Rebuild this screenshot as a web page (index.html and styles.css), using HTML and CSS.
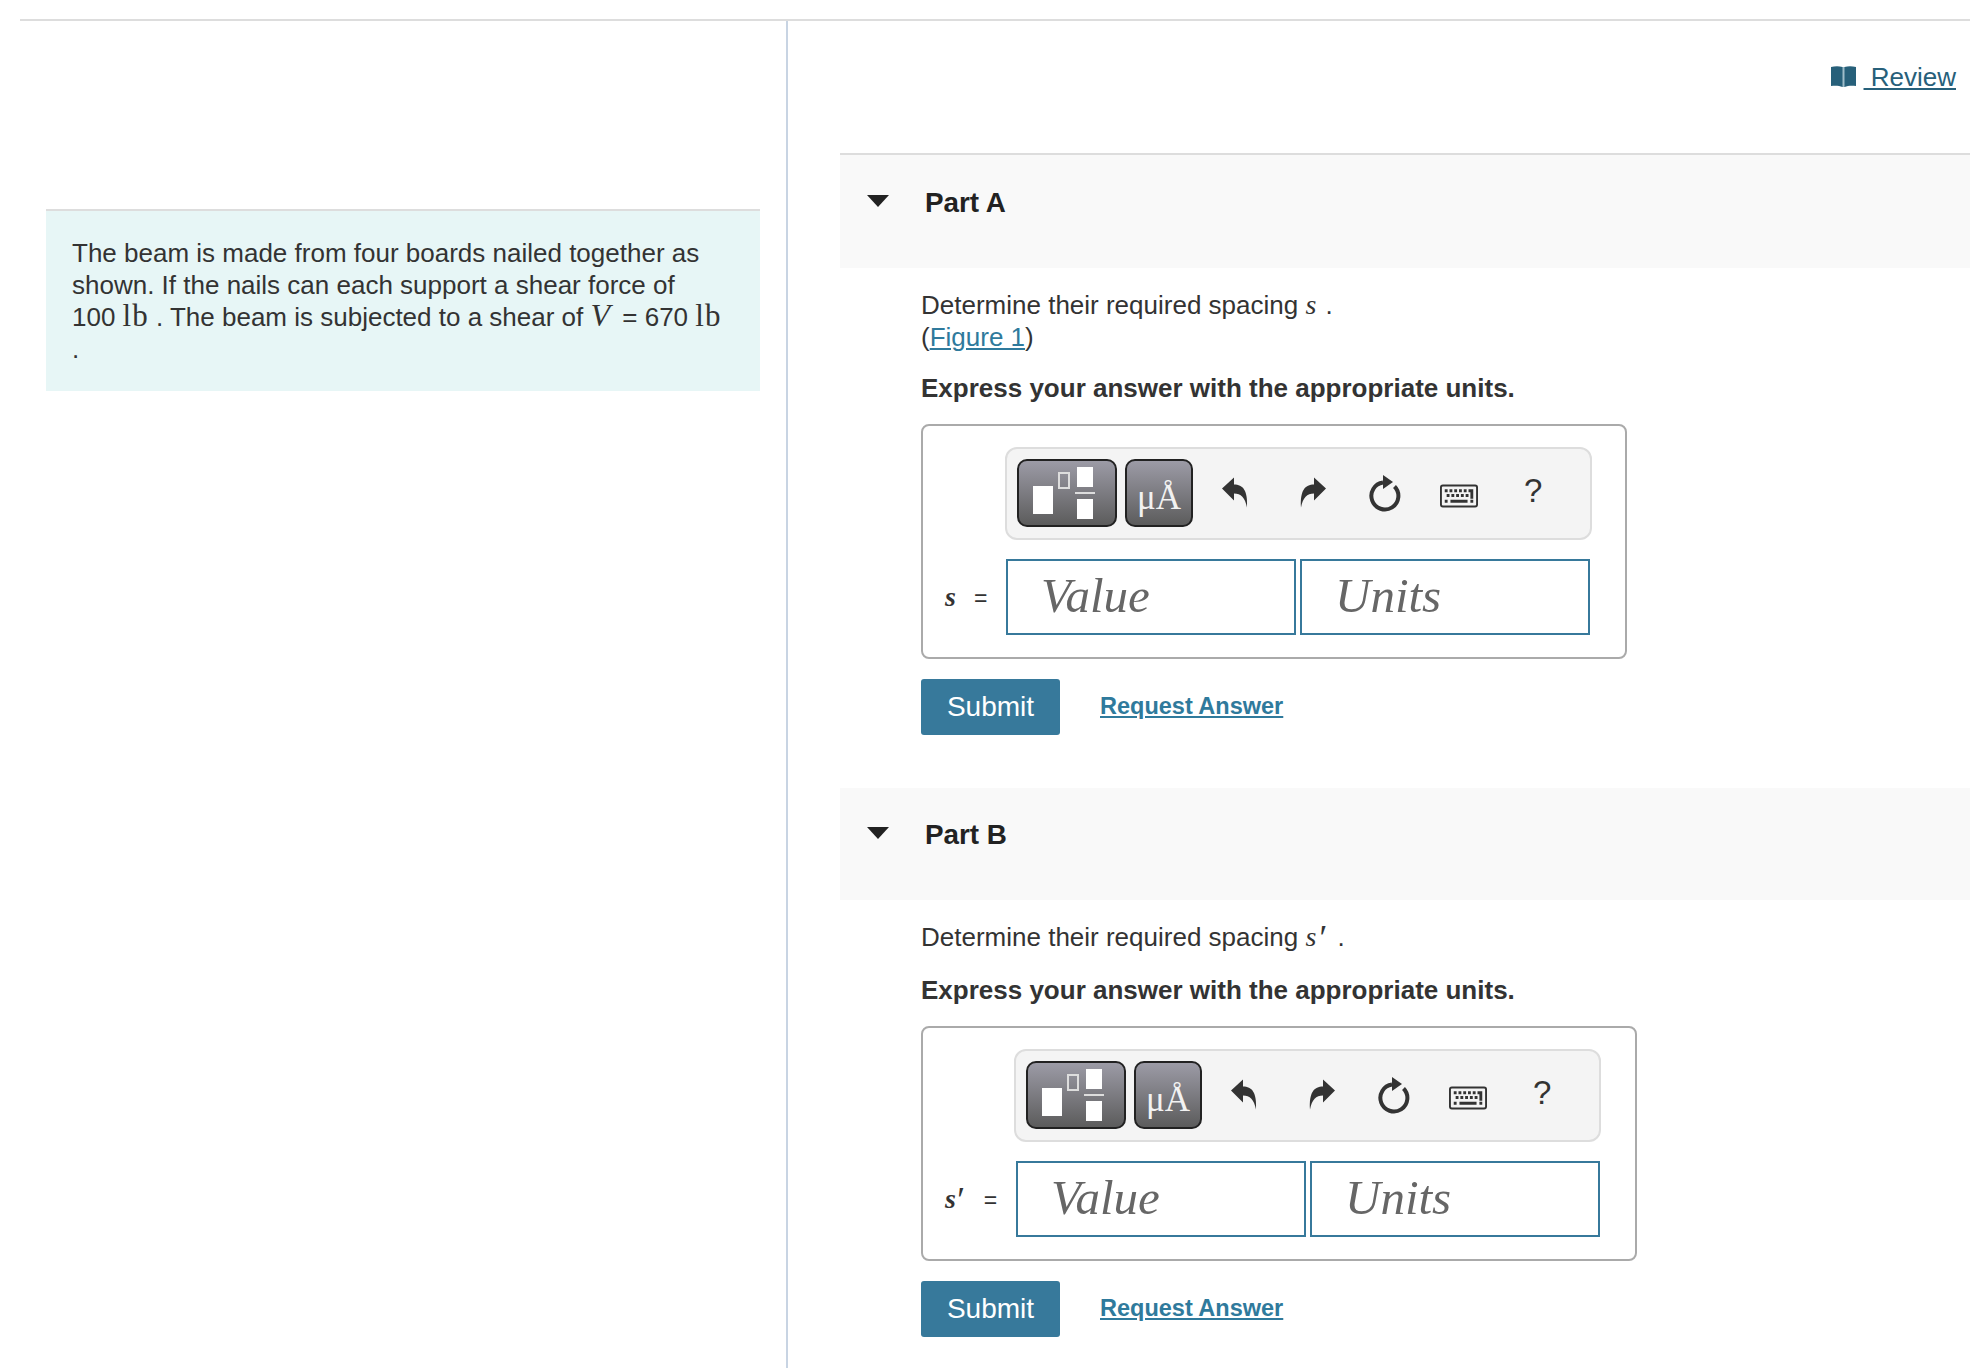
FILE: index.html
```html
<!DOCTYPE html>
<html lang="en">

<head>
    <meta charset="UTF-8">
    <title>Beam shear problem</title>
    <link rel="stylesheet" href="styles.css">
</head>

<body>
    <svg class="sprites" width="0" height="0">
        <symbol id="ico-undo" viewBox="0 0 28 32">
            <path d="M1 12 L13 1 L13 8 C22 8 27 14 26 31 C24 21 20 17 13 17 L13 24 Z" />
        </symbol>
        <symbol id="ico-redo" viewBox="0 0 28 32">
            <path d="M27 12 L15 1 L15 8 C6 8 1 14 2 31 C4 21 8 17 15 17 L15 24 Z" />
        </symbol>
        <symbol id="ico-reset" viewBox="0 0 34 38">
            <path class="ring" d="M26.5 12.5 A13.5 13.5 0 1 1 15 8.6" />
            <path d="M15 1 L25 8 L15 15 Z" />
        </symbol>
        <symbol id="ico-keys" viewBox="0 0 40 24">
            <rect class="key-frame" x="1" y="1" width="38" height="22" rx="2" />
            <path d="M5 5h3v3h-3zM10 5h3v3h-3zM15 5h3v3h-3zM20 5h3v3h-3zM25 5h3v3h-3zM30 5h5v3h-5zM7 10h3v3h-3zM12 10h3v3h-3zM17 10h3v3h-3zM22 10h3v3h-3zM27 10h3v3h-3zM32 8h3v7h-3zM5 16h3v3h-3zM11 16h18v3h-18zM32 16h3v3h-3z" />
        </symbol>
    </svg>

    <div class="page">
        <div class="top-line"></div>
        <div class="columns">
            <div class="left-col">
                <div class="intro">
                    The beam is made from four boards nailed together as shown. If the nails can each support a shear force of
                    <span class="nowrap">100 <span class="math unit">lb</span></span> . The beam is subjected to a shear of <span class="math var">V</span> = 670 <span class="math unit">lb</span>
                    <br>.
                </div>
            </div>

            <div class="right-col">
                <div class="review-row">
                    <svg class="book" viewBox="0 0 25 21">
                        <rect class="book-gutter" x="11" y="1" width="3" height="20" />
                        <path d="M0 1 C4 0 8 0 11.5 1 V21 C8 19.5 4 19.5 0 20 Z M13.5 1 C17 0 21 0 25 1 V20 C21 19.5 17 19.5 13.5 21 Z" />
                    </svg>
                    <a class="review" href="#">&nbsp;Review</a>
                </div>

                <div class="part-head part-head-first">
                    <span class="caret"></span>
                    <span class="part-title">Part A</span>
                </div>
                <div class="part-body part-body-a">
                    <p class="question">Determine their required spacing <span class="math var">s</span> .<br>(<a href="#">Figure 1</a>)</p>
                    <p class="hint">Express your answer with the appropriate units.</p>
                    <div class="answer-box">
                        <div class="toolbar">
                            <div class="tool-btn tool-wide">
                                <span class="tpl-big"></span>
                                <span class="tpl-small"></span>
                                <span class="tpl-frac"><i></i><b></b><i></i></span>
                            </div>
                            <div class="tool-btn tool-units">μÅ</div>
                            <svg class="ico ico-undo"><use href="#ico-undo" /></svg>
                            <svg class="ico ico-redo"><use href="#ico-redo" /></svg>
                            <svg class="ico ico-reset"><use href="#ico-reset" /></svg>
                            <svg class="ico ico-keys"><use href="#ico-keys" /></svg>
                            <span class="ico-help">?</span>
                        </div>
                        <div class="input-row">
                            <span class="lhs"><span class="math var">s</span><span class="eq">=</span></span>
                            <div class="field">Value</div>
                            <div class="field">Units</div>
                        </div>
                    </div>
                    <div class="actions">
                        <button class="submit">Submit</button>
                        <a class="request" href="#">Request Answer</a>
                    </div>
                </div>

                <div class="part-head">
                    <span class="caret"></span>
                    <span class="part-title">Part B</span>
                </div>
                <div class="part-body part-body-b">
                    <p class="question">Determine their required spacing <span class="math var">s</span><span class="prime">′</span> .</p>
                    <p class="hint">Express your answer with the appropriate units.</p>
                    <div class="answer-box answer-box-b">
                        <div class="toolbar">
                            <div class="tool-btn tool-wide">
                                <span class="tpl-big"></span>
                                <span class="tpl-small"></span>
                                <span class="tpl-frac"><i></i><b></b><i></i></span>
                            </div>
                            <div class="tool-btn tool-units">μÅ</div>
                            <svg class="ico ico-undo"><use href="#ico-undo" /></svg>
                            <svg class="ico ico-redo"><use href="#ico-redo" /></svg>
                            <svg class="ico ico-reset"><use href="#ico-reset" /></svg>
                            <svg class="ico ico-keys"><use href="#ico-keys" /></svg>
                            <span class="ico-help">?</span>
                        </div>
                        <div class="input-row">
                            <span class="lhs"><span class="math var">s</span><span class="prime">′</span><span class="eq">=</span></span>
                            <div class="field">Value</div>
                            <div class="field">Units</div>
                        </div>
                    </div>
                    <div class="actions">
                        <button class="submit">Submit</button>
                        <a class="request" href="#">Request Answer</a>
                    </div>
                </div>
            </div>
        </div>
    </div>
</body>

</html>
```

FILE: styles.css
```css
html,
body {
    margin: 0;
    padding: 0;
    background: #fff;
}

body {
    font-family: "Liberation Sans", Arial, sans-serif;
    font-size: 26px;
    line-height: 32px;
    color: #333;
    overflow: hidden;
    height: 1368px;
}

a {
    color: #2f7a9c;
}

.sprites {
    position: absolute;
}

.page {
    padding-top: 19px;
    height: 1349px;
}

.top-line {
    margin-left: 20px;
    height: 2px;
    background: #ddd;
}

.columns {
    display: flex;
    height: 1347px;
}

.left-col {
    margin-left: 20px;
    flex: none;
    border-right: 2px solid #c8d4e3;
    padding: 188px 0 0 26px;
    width: 740px;
}

.intro {
    width: 662px;
    height: 128px;
    padding: 26px;
    background: #e7f6f6;
    border-top: 2px solid #ddd;
}

.nowrap {
    white-space: nowrap;
}

.math {
    font-family: "Liberation Serif", serif;
    line-height: 0;
}

.var {
    font-style: italic;
    font-size: 28px;
}

.unit {
    font-size: 31px;
    letter-spacing: 1px;
}

.intro .var {
    font-size: 32px;
    margin-right: 5px;
}

.question .var {
    margin-right: 2px;
}

.right-col {
    flex: 1;
    min-width: 0;
}

.review-row {
    height: 132px;
    box-sizing: border-box;
    padding: 41px 14px 0 0;
    display: flex;
    justify-content: flex-end;
    align-items: flex-start;
}

.book {
    width: 25px;
    height: 21px;
    margin: 4px 8px 0 0;
    fill: #27607a;
}

.book-gutter {
    fill: #9fbcc9;
}

.review {
    color: #27607a;
    line-height: 30px;
}

.part-head {
    margin-left: 52px;
    height: 112px;
    background: #f9f9f9;
    display: flex;
    align-items: flex-start;
    padding-top: 29px;
    box-sizing: border-box;
}

.part-head-first {
    height: 115px;
    padding-top: 30px;
    border-top: 2px solid #ddd;
}

.caret {
    width: 0;
    height: 0;
    border-left: 11px solid transparent;
    border-right: 11px solid transparent;
    border-top: 12px solid #222;
    margin: 10px 0 0 27px;
}

.part-title {
    font-weight: bold;
    margin: 2px 0 0 36px;
    font-size: 27.8px;
    color: #222;
}

.part-body {
    margin-left: 133px;
    box-sizing: border-box;
}

.part-body-a {
    height: 520px;
    padding-top: 21px;
}

.part-body-b {
    height: 469px;
    padding-top: 21px;
}

.part-body p {
    margin: 0;
}

.question a {
    text-decoration: underline;
}

.prime {
    font-family: "Liberation Serif", serif;
    font-style: italic;
    font-size: 36px;
    position: relative;
    top: 4px;
    line-height: 0;
    margin-left: -1px;
    margin-right: 5px;
}

.hint {
    font-weight: bold;
    margin-top: 19px !important;
}

.part-body-b .hint {
    margin-top: 21px !important;
}

.answer-box {
    width: 706px;
    height: 235px;
    margin-top: 20px;
    box-sizing: border-box;
    border: 2px solid #aaa;
    border-radius: 8px;
    padding: 21px 0 0 82px;
}

.answer-box-b {
    width: 716px;
    padding-left: 91px;
}

.toolbar {
    width: 587px;
    height: 93px;
    box-sizing: border-box;
    border: 2px solid #ddd;
    border-radius: 12px;
    background: #f4f4f4;
    display: flex;
    align-items: center;
    padding: 0 0 2px 10px;
}

.tool-btn {
    height: 68px;
    box-sizing: border-box;
    border: 2px solid #222;
    border-radius: 10px;
    background: linear-gradient(#9c9ba6, #5c5c5c);
    position: relative;
    flex: none;
    color: #f2f2f2;
}

.tool-wide {
    width: 100px;
    margin-right: 8px;
}

.tool-units {
    width: 68px;
    font-family: "Liberation Serif", serif;
    font-size: 35px;
    line-height: 74px;
    text-align: center;
}

.tpl-big {
    position: absolute;
    left: 14px;
    top: 25px;
    width: 20px;
    height: 28px;
    background: #fff;
}

.tpl-small {
    position: absolute;
    left: 39px;
    top: 11px;
    width: 8px;
    height: 13px;
    border: 2px solid #ddd;
}

.tpl-frac {
    position: absolute;
    left: 56px;
    top: 6px;
    width: 20px;
    display: flex;
    flex-direction: column;
    align-items: center;
}

.tpl-frac i {
    display: block;
    width: 16px;
    height: 20px;
    background: #fff;
}

.tpl-frac b {
    display: block;
    width: 20px;
    height: 2px;
    margin: 5px 0 5px;
    background: #ddd;
}

.ico {
    flex: none;
    fill: #333;
}

.ring {
    fill: none;
    stroke: #333;
    stroke-width: 4;
}

.key-frame {
    fill: none;
    stroke: #333;
    stroke-width: 2;
}

.ico-undo {
    width: 28px;
    height: 33px;
    margin-left: 28px;
}

.ico-redo {
    width: 28px;
    height: 33px;
    margin-left: 50px;
}

.ico-reset {
    width: 34px;
    height: 38px;
    margin-left: 41px;
}

.ico-keys {
    width: 38px;
    height: 24px;
    margin: 6px 0 0 38px;
}

.ico-help {
    margin-left: 46px;
    font-size: 33px;
    margin-top: -4px;
}

.input-row {
    display: flex;
    align-items: center;
    margin-top: 19px;
    margin-left: -82px;
}

.answer-box-b .input-row {
    margin-left: -91px;
}

.lhs {
    width: 83px;
    padding-left: 22px;
    box-sizing: border-box;
    flex: none;
    font-size: 23px;
    display: flex;
    align-items: baseline;
}

.answer-box-b .lhs {
    width: 93px;
}

.eq {
    margin-left: 18px;
}

.lhs .prime + .eq {
    margin-left: 16px;
}

.lhs .var {
    font-weight: bold;
    line-height: 32px;
}

.field {
    width: 290px;
    height: 76px;
    box-sizing: border-box;
    border: 2px solid #37799b;
    margin-right: 4px;
    padding-left: 33px;
    font-family: "Liberation Serif", serif;
    font-style: italic;
    font-size: 49px;
    line-height: 70px;
    color: #666;
    flex: none;
}

.actions {
    display: flex;
    align-items: center;
    margin-top: 20px;
}

.submit {
    width: 139px;
    height: 56px;
    border: 0;
    border-radius: 3px;
    background: #37799b;
    color: #fff;
    font-family: inherit;
    font-size: 28px;
    padding: 0;
}

.request {
    margin: 0 0 2px 40px;
    font-weight: bold;
    font-size: 23.5px;
}
```
